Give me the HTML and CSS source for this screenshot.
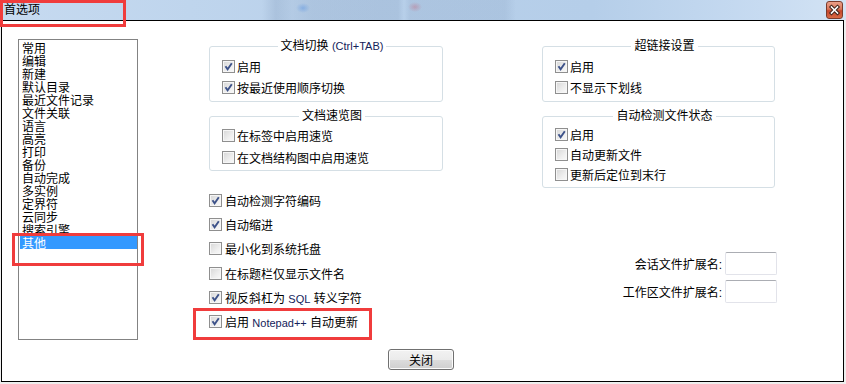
FILE: index.html
```html
<!DOCTYPE html>
<html lang="zh-CN">
<head>
    <meta charset="UTF-8">
    <title>首选项</title>
    <link rel="stylesheet" href="styles.css">
</head>
<body>
    <div class="window">
        <div class="titlebar">
            <span class="title">首选项</span>
            <span class="close-btn">
                <svg width="17" height="18" viewBox="0 0 17 18">
                    <path d="M5.5 6 L11.5 12 M11.5 6 L5.5 12" stroke="#3a2018" stroke-width="3.6" stroke-linecap="square"/>
                    <path d="M5.5 6 L11.5 12 M11.5 6 L5.5 12" stroke="#fff" stroke-width="1.6" stroke-linecap="square"/>
                </svg>
            </span>
        </div>

        <div class="dialog">
            <div class="main">
                <ul class="listbox">
                    <li>常用</li>
                    <li>编辑</li>
                    <li>新建</li>
                    <li>默认目录</li>
                    <li>最近文件记录</li>
                    <li>文件关联</li>
                    <li>语言</li>
                    <li>高亮</li>
                    <li>打印</li>
                    <li>备份</li>
                    <li>自动完成</li>
                    <li>多实例</li>
                    <li>定界符</li>
                    <li>云同步</li>
                    <li>搜索引擎</li>
                    <li class="selected">其他</li>
                </ul>

                <div class="col col-mid">
                    <fieldset class="group g-short">
                        <legend>文档切换 <span class="latin">(Ctrl+TAB)</span></legend>
                        <label class="check"><span class="box"><svg class="tick" width="11" height="11" viewBox="0 0 11 11"><path d="M2.5 5.2 L4.6 8.3 L8.8 2.2" fill="none" stroke="#3d5289" stroke-width="1.9"/></svg></span><span>启用</span></label>
                        <label class="check"><span class="box"><svg class="tick" width="11" height="11" viewBox="0 0 11 11"><path d="M2.5 5.2 L4.6 8.3 L8.8 2.2" fill="none" stroke="#3d5289" stroke-width="1.9"/></svg></span><span>按最近使用顺序切换</span></label>
                    </fieldset>

                    <fieldset class="group g-preview">
                        <legend>文档速览图</legend>
                        <label class="check"><span class="box"></span><span>在标签中启用速览</span></label>
                        <label class="check"><span class="box"></span><span>在文档结构图中启用速览</span></label>
                    </fieldset>

                    <div class="checks">
                        <label class="check"><span class="box"><svg class="tick" width="11" height="11" viewBox="0 0 11 11"><path d="M2.5 5.2 L4.6 8.3 L8.8 2.2" fill="none" stroke="#3d5289" stroke-width="1.9"/></svg></span><span>自动检测字符编码</span></label>
                        <label class="check"><span class="box"><svg class="tick" width="11" height="11" viewBox="0 0 11 11"><path d="M2.5 5.2 L4.6 8.3 L8.8 2.2" fill="none" stroke="#3d5289" stroke-width="1.9"/></svg></span><span>自动缩进</span></label>
                        <label class="check"><span class="box"></span><span>最小化到系统托盘</span></label>
                        <label class="check"><span class="box"></span><span>在标题栏仅显示文件名</span></label>
                        <label class="check"><span class="box"><svg class="tick" width="11" height="11" viewBox="0 0 11 11"><path d="M2.5 5.2 L4.6 8.3 L8.8 2.2" fill="none" stroke="#3d5289" stroke-width="1.9"/></svg></span><span>视反斜杠为 <span class="latin">SQL</span> 转义字符</span></label>
                        <label class="check"><span class="box"><svg class="tick" width="11" height="11" viewBox="0 0 11 11"><path d="M2.5 5.2 L4.6 8.3 L8.8 2.2" fill="none" stroke="#3d5289" stroke-width="1.9"/></svg></span><span>启用 <span class="latin">Notepad++</span> 自动更新</span></label>
                    </div>
                </div>

                <div class="col col-right">
                    <fieldset class="group g-short">
                        <legend>超链接设置</legend>
                        <label class="check"><span class="box"><svg class="tick" width="11" height="11" viewBox="0 0 11 11"><path d="M2.5 5.2 L4.6 8.3 L8.8 2.2" fill="none" stroke="#3d5289" stroke-width="1.9"/></svg></span><span>启用</span></label>
                        <label class="check"><span class="box"></span><span>不显示下划线</span></label>
                    </fieldset>

                    <fieldset class="group g-detect">
                        <legend>自动检测文件状态</legend>
                        <label class="check"><span class="box"><svg class="tick" width="11" height="11" viewBox="0 0 11 11"><path d="M2.5 5.2 L4.6 8.3 L8.8 2.2" fill="none" stroke="#3d5289" stroke-width="1.9"/></svg></span><span>启用</span></label>
                        <label class="check"><span class="box"></span><span>自动更新文件</span></label>
                        <label class="check"><span class="box"></span><span>更新后定位到末行</span></label>
                    </fieldset>

                    <div class="ext">
                        <div class="ext-row"><span>会话文件扩展名:</span><span class="field"></span></div>
                        <div class="ext-row"><span>工作区文件扩展名:</span><span class="field"></span></div>
                    </div>
                </div>
            </div>

            <div class="footer">
                <button class="btn">关闭</button>
            </div>
        </div>

        <!-- red annotation frames drawn on the screenshot -->
        <div class="mark mark-title"></div>
        <div class="mark mark-list"></div>
        <div class="mark mark-update"></div>
    </div>
</body>
</html>
```

FILE: styles.css
```css
* {
    margin: 0;
    padding: 0;
    box-sizing: border-box;
}

body {
    font-family: 'Liberation Sans', 'Noto Sans CJK SC', sans-serif;
    font-size: 12px;
    color: #000;
    background: #eeeeee;
}

.window {
    position: relative;
    width: 846px;
    height: 384px;
    overflow: hidden;
}

/* title bar */
.titlebar {
    height: 20px;
    display: flex;
    align-items: center;
    background:
        radial-gradient(7px 5px at 303px 8px, rgba(60, 130, 225, 0.35), transparent),
        radial-gradient(7px 5px at 415px 7px, rgba(205, 70, 90, 0.3), transparent),
        linear-gradient(to right, transparent 262px, rgba(110, 135, 170, 0.22) 276px, rgba(110, 135, 170, 0.1) 292px,
            rgba(110, 135, 170, 0.18) 312px, rgba(110, 135, 170, 0.18) 398px, transparent 404px,
            rgba(110, 135, 170, 0.15) 410px, rgba(110, 135, 170, 0.15) 505px, transparent 516px),
        linear-gradient(to right, #c6daf0, #b8d0ea 45%, #b5cee9 70%, #c7dbf1 90%, #d3e3f4);
}

.title {
    padding-left: 4px;
    line-height: 20px;
}

.close-btn {
    margin-left: auto;
    margin-right: 3px;
    width: 17px;
    height: 18px;
    border: 1px solid #7b3b2c;
    border-radius: 3px;
    background: linear-gradient(#eaa089, #d9765a 45%, #c5452b 55%, #d86a45);
    display: flex;
}

.close-btn svg {
    margin: -1px;
}

/* dialog body */
.dialog {
    margin: 0 2px 0 1px;
    height: 362px;
    border: 1px solid #000;
    background: #fff;
}

.main {
    display: flex;
    padding-top: 18px;
}

.listbox {
    list-style: none;
    margin-left: 16px;
    width: 120px;
    height: 301px;
    border: 1px solid #838383;
    padding: 1px 0 0 1px;
    font-family: 'Noto Sans CJK SC', sans-serif;
    line-height: 13px;
}

.listbox li {
    height: 13px;
    padding-left: 2px;
    white-space: nowrap;
}

.listbox li.selected {
    background: #3399ff;
    color: #fff;
}

.col-mid {
    margin-left: 71px;
    width: 234px;
}

.col-right {
    margin-left: 99px;
    width: 235px;
}

/* group boxes */
.group {
    width: 233px;
    border: 1px solid #d5dfe5;
    border-radius: 3px;
    padding: 2px 0 0 12px;
    min-width: 0;
}

.col-mid .group {
    width: 234px;
}

.group legend {
    margin: 0 auto;
    padding: 0 3px;
    line-height: 14px;
}

.group .check + .check {
    margin-top: 1px;
}

.g-short {
    height: 63px;
    padding-top: 3px;
}

.g-preview {
    height: 62px;
    margin-top: 7px;
}

.g-preview .check + .check {
    margin-top: 2px;
}

.g-detect {
    height: 79px;
    margin-top: 7px;
    padding-top: 1px;
}

.g-detect .check + .check {
    margin-top: 0;
}

/* checkboxes */
.check {
    display: flex;
    align-items: center;
    height: 20px;
    white-space: nowrap;
}

.box {
    flex: none;
    width: 13px;
    height: 13px;
    margin-right: 2px;
    border: 1px solid #8f8f8f;
    background: linear-gradient(135deg, #d6d6d6, #eeeeee 60%, #fafafa);
    box-shadow: inset 0 0 0 1px #f6f6f6;
    display: flex;
    align-items: center;
    justify-content: center;
}

.latin {
    font-size: 11px;
    color: #14225a;
}

.checks {
    margin-top: 19px;
    display: flex;
    flex-direction: column;
    gap: 4.4px;
}

.checks .box {
    margin-right: 3px;
}

/* extension fields */
.ext {
    margin-top: 64px;
    display: flex;
    flex-direction: column;
    gap: 5px;
}

.ext-row {
    display: flex;
    justify-content: flex-end;
    align-items: center;
    gap: 3px;
}

.field {
    width: 52px;
    height: 23px;
    border: 1px solid #e2e3ea;
    border-top-color: #abadb3;
    border-radius: 2px;
    background: #fff;
}

/* footer */
.footer {
    display: flex;
    justify-content: center;
    padding: 9px 3px 0 0;
}

.btn {
    width: 66px;
    height: 21px;
    font-family: inherit;
    font-size: 12px;
    color: #000;
    border: 1px solid #707070;
    border-radius: 3px;
    background: linear-gradient(#f2f2f2, #ebebeb 50%, #dddddd 51%, #cfcfcf);
    box-shadow: inset 0 0 0 1px #fbfbfb;
}

/* annotation frames */
.mark {
    position: absolute;
    border: 3px solid #f03c3c;
}

.mark-title {
    left: 0;
    top: 0;
    width: 126px;
    height: 27px;
}

.mark-list {
    left: 12px;
    top: 233px;
    width: 132px;
    height: 33px;
}

.mark-update {
    left: 193px;
    top: 308px;
    width: 179px;
    height: 32px;
}
```
